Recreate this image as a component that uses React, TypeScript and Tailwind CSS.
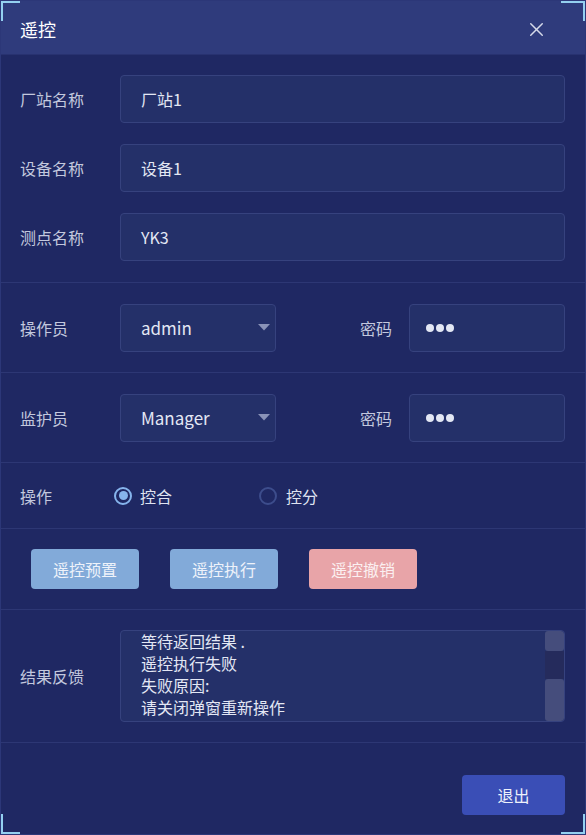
import { useState } from 'react';
import { X } from 'lucide-react';

const font = { fontFamily: '"Noto Sans CJK SC", "Noto Sans", sans-serif' };

function Field({ value, className = '' }: { value: string; className?: string }) {
  return (
    <div
      className={`h-12 flex items-center px-5 rounded border border-[#36427e] bg-[#243069] text-[16px] text-[#e3e7f4] ${className}`}
    >
      {value}
    </div>
  );
}

function Select({ value }: { value: string }) {
  return (
    <div className="w-[156px] h-12 flex items-center justify-between pl-5 pr-[5px] rounded border border-[#36427e] bg-[#243069] text-[17px] text-[#e3e7f4]">
      <span>{value}</span>
      <svg width="12" height="7" viewBox="0 0 12 7">
        <path d="M0 0h12L6 6.5z" fill="#8a93b8" />
      </svg>
    </div>
  );
}

function Password() {
  return (
    <div className="w-[156px] h-12 flex items-center gap-[2px] px-4 rounded border border-[#36427e] bg-[#243069]">
      {[0, 1, 2].map((i) => (
        <span key={i} className="w-[8px] h-[8px] rounded-full bg-[#e3e7f4]" />
      ))}
    </div>
  );
}

export default function App() {
  const [mode, setMode] = useState('he');

  return (
    <div className="w-[586px] h-[835px] relative bg-[#1f2863] border border-[#2c3778] flex flex-col text-[#c3c8de]" style={font}>
      {/* corner accents */}
      <span className="absolute left-0 top-0 w-[19px] h-[20px] border-l-2 border-t-2 border-[#94d0f0]" />
      <span className="absolute right-0 top-0 w-[24px] h-[20px] border-r-2 border-t-2 border-[#94d0f0]" />
      <span className="absolute left-0 bottom-0 w-[19px] h-[20px] border-l-2 border-b-2 border-[#94d0f0]" />
      <span className="absolute right-0 bottom-0 w-[24px] h-[20px] border-r-2 border-b-2 border-[#94d0f0]" />

      {/* header */}
      <div className="h-[54px] shrink-0 flex items-center justify-between pt-[3px] pl-[19px] pr-[37px] bg-[#2f3b7c] border-b border-[#283270]">
        <span className="text-[18px] text-white">遥控</span>
        <X size={23} strokeWidth={1.5} className="text-[#d6daea]" />
      </div>

      {/* basic info */}
      <div className="flex flex-col gap-[21px] pt-5 pb-[21px] pr-5 border-b border-[#2d3774]">
        {[
          ['厂站名称', '厂站1'],
          ['设备名称', '设备1'],
          ['测点名称', 'YK3'],
        ].map(([label, value]) => (
          <div key={label} className="flex items-center">
            <span className="w-[119px] pl-[19px] text-[16px]">{label}</span>
            <Field value={value} className="flex-1" />
          </div>
        ))}
      </div>

      {/* operator */}
      {[
        ['操作员', 'admin'],
        ['监护员', 'Manager'],
      ].map(([label, value]) => (
        <div key={label} className="flex items-center h-[90px] pr-5 border-b border-[#2d3774]">
          <span className="w-[119px] pl-[19px] text-[16px]">{label}</span>
          <Select value={value} />
          <span className="ml-[84px] w-[49px] text-[16px]">密码</span>
          <Password />
        </div>
      ))}

      {/* radios */}
      <div className="flex items-center h-[66px] border-b border-[#2d3774]">
        <span className="w-[113px] pl-[19px] text-[16px]">操作</span>
        <button className="flex items-center gap-[8px] w-[145px]" onClick={() => setMode('he')}>
          <span className={`w-[18px] h-[18px] rounded-full border-2 flex items-center justify-center ${mode === 'he' ? 'border-[#86b4ec]' : 'border-[#3d4d8c]'}`}>
            {mode === 'he' && <span className="w-[9px] h-[9px] rounded-full bg-[#86b4ec]" />}
          </span>
          <span className="text-[16px] text-[#dfe3f1]">控合</span>
        </button>
        <button className="flex items-center gap-[9px]" onClick={() => setMode('fen')}>
          <span className={`w-[18px] h-[18px] rounded-full border-2 flex items-center justify-center ${mode === 'fen' ? 'border-[#86b4ec]' : 'border-[#3d4d8c]'}`}>
            {mode === 'fen' && <span className="w-[9px] h-[9px] rounded-full bg-[#86b4ec]" />}
          </span>
          <span className="text-[16px] text-[#dfe3f1]">控分</span>
        </button>
      </div>

      {/* actions */}
      <div className="flex items-center gap-[31px] h-[81px] pl-[30px] border-b border-[#2d3774]">
        <button className="w-[108px] h-10 rounded bg-[#82aad9] text-[16px] text-[#eef2fa]">遥控预置</button>
        <button className="w-[108px] h-10 rounded bg-[#82aad9] text-[16px] text-[#eef2fa]">遥控执行</button>
        <button className="w-[108px] h-10 rounded bg-[#e8a4a8] text-[16px] text-[#fbf0f1]">遥控撤销</button>
      </div>

      {/* result */}
      <div className="flex items-center h-[133px] pr-5 border-b border-[#2d3774]">
        <span className="w-[119px] pl-[19px] text-[16px]">结果反馈</span>
        <div className="flex-1 h-[92px] flex rounded border border-[#36427e] bg-[#243069] overflow-hidden">
          <div className="flex-1 pl-5 -mt-[1px] text-[16px] leading-[22px] text-[#e3e7f4]">
            <div>等待返回结果 .</div>
            <div>遥控执行失败</div>
            <div>失败原因:</div>
            <div>请关闭弹窗重新操作</div>
          </div>
          <div className="w-[19px] flex flex-col">
            <span className="h-[20px] rounded-[3px] bg-[#454d7c]" />
            <span className="h-[28px] bg-[#252b5c]" />
            <span className="flex-1 rounded-[3px] bg-[#454d7c]" />
          </div>
        </div>
      </div>

      {/* footer */}
      <div className="flex-1 flex justify-end items-start pt-[32px] pr-5">
        <button className="w-[103px] h-10 rounded bg-[#3a4eb6] text-[16px] text-[#eef1fb]">退出</button>
      </div>
    </div>
  );
}
